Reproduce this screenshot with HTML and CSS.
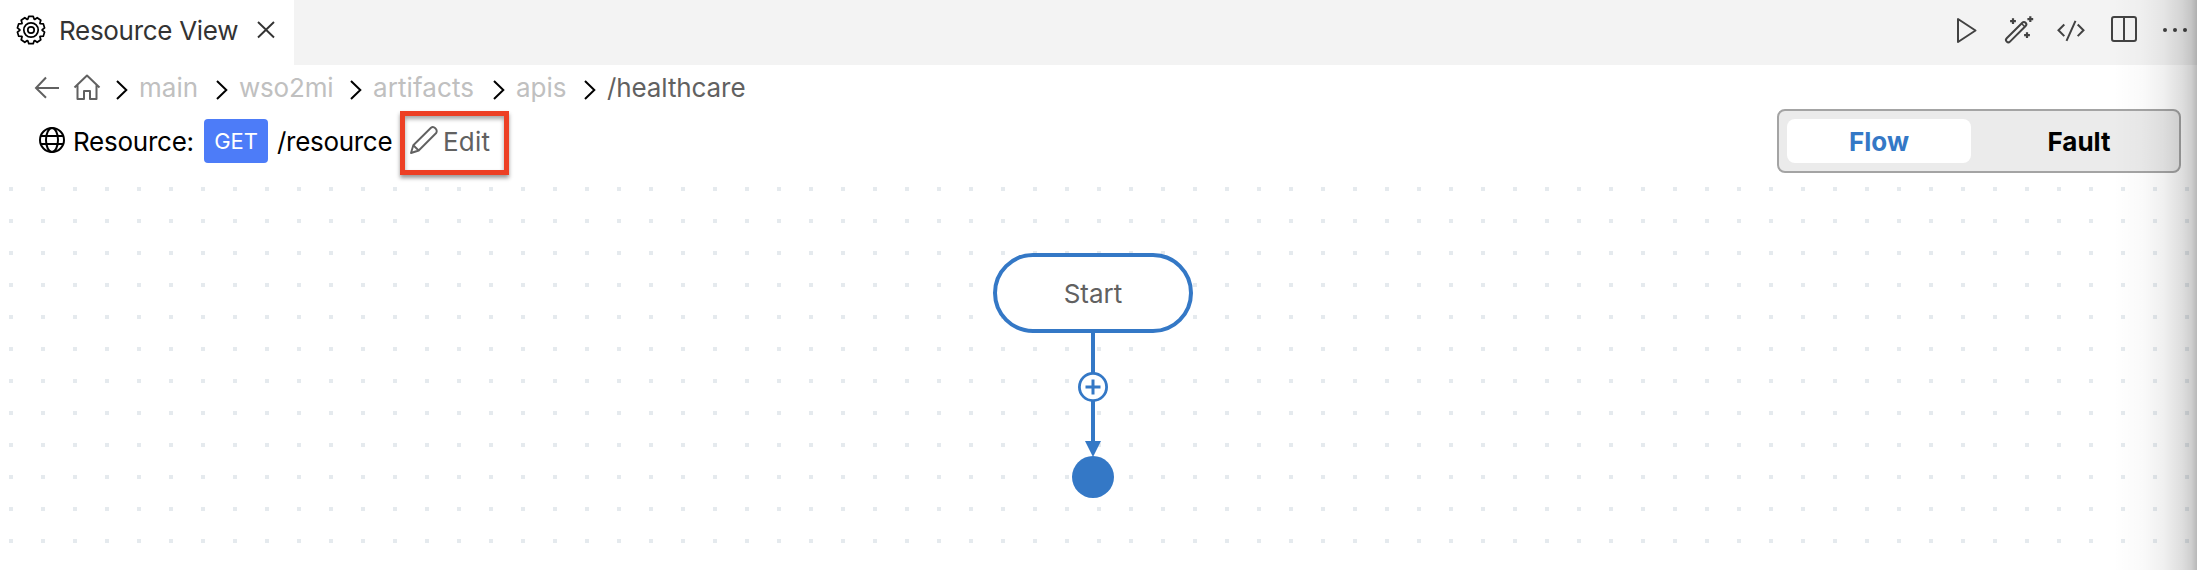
FILE: index.html
```html
<!DOCTYPE html>
<html lang="en">
<head>
<meta charset="utf-8">
<title>Resource View</title>
<link rel="stylesheet" href="styles.css">
</head>
<body>
<div class="window">
  <header class="tabbar">
    <div class="tab">
      <svg class="tab-gear" width="32" height="32" viewBox="-16 -16 32 32" fill="none" stroke="#000" stroke-width="1.7" stroke-linejoin="round">
        <path d="M-3.2-10.7 L-2.2-13.6 L2.2-13.6 L3.2-10.7 L3.7-10.5 L6.2-12.3 L9.8-9.7 L8.9-6.7 L9.2-6.3 L12.3-6.2 L13.6-2.1 L11.2-.3 L11.2.3 L13.6 2.1 L12.3 6.2 L9.2 6.3 L8.9 6.7 L9.8 9.7 L6.2 12.3 L3.7 10.5 L3.2 10.7 L2.2 13.6 L-2.2 13.6 L-3.2 10.7 L-3.7 10.5 L-6.2 12.3 L-9.8 9.7 L-8.9 6.7 L-9.2 6.3 L-12.3 6.2 L-13.6 2.1 L-11.2.3 L-11.2-.3 L-13.6-2.1 L-12.3-6.2 L-9.2-6.3 L-8.9-6.7 L-9.8-9.7 L-6.2-12.3 L-3.7-10.5 Z"/>
        <circle r="7.2"/><circle r="3.2"/>
      </svg>
      <span class="tab-title">Resource View</span>
      <svg class="tab-close" width="18" height="18" viewBox="0 0 18 18" fill="none" stroke="#333" stroke-width="1.9"><path d="M1 1 17 16.500M17 1 1 16.500"/></svg>
    </div>
    <div class="actions">
      <svg width="28" height="32" viewBox="0 0 28 32" fill="none" stroke="#424242" stroke-width="2" stroke-linejoin="round"><path d="M5 5V28L22.500 16.500Z"/></svg>
      <svg class="wand" width="32" height="32" viewBox="0 0 32 32" fill="none" stroke="#424242" stroke-width="2"><path d="M3.700 24.300 19.300 8.700a2.300 2.300 0 0 1 3.300 3.300L7 27.600a2.300 2.300 0 0 1-3.300-3.300Z"/><path d="M18.500 9.500 21.800 12.800" stroke-width="1.500"/><path d="M10 4.200V10M7.100 7.100H12.900M27.300 2.200V8M24.400 5.100H30.200M24 18.200V24M21.100 21.100H26.900" stroke-width="2.200"/></svg>
      <svg class="code" width="30" height="32" viewBox="0 0 30 32" fill="none" stroke="#424242" stroke-width="2"><path d="M8.300 10.500 2.500 16.300 8.300 22.100M21.700 10.500 27.500 16.300 21.700 22.100M19.500 6.800 10.500 26.800"/></svg>
      <svg class="split" width="28" height="32" viewBox="0 0 28 32" fill="none" stroke="#424242" stroke-width="2"><rect x="2" y="3" width="24" height="24" rx="2"/><path d="M14 3V27"/></svg>
      <svg class="more" width="28" height="32" viewBox="0 0 28 32" fill="#424242"><circle cx="4" cy="16" r="2"/><circle cx="14" cy="16" r="2"/><circle cx="24" cy="16" r="2"/></svg>
    </div>
  </header>

  <nav class="crumbs">
    <svg class="back" width="26" height="24" viewBox="0 0 26 24" fill="none" stroke="#616161" stroke-width="2"><path d="M12 1.500 2 12 12 21.800M2 12H25"/></svg>
    <svg class="home" width="28" height="28" viewBox="0 0 28 28" fill="none" stroke="#616161" stroke-width="2" stroke-linejoin="round"><path d="M1.500 14.500 14 2.500 26.500 14.500M4.500 12V26H11V18H17V26H23.500V12"/></svg>
    <svg class="chev" width="12" height="20" viewBox="0 0 12 20"><path d="M1 1 10.300 10 1 19"/></svg>
    <span class="crumb main">main</span>
    <svg class="chev" width="12" height="20" viewBox="0 0 12 20"><path d="M1 1 10.300 10 1 19"/></svg>
    <span class="crumb project">wso2mi</span>
    <svg class="chev" width="12" height="20" viewBox="0 0 12 20"><path d="M1 1 10.300 10 1 19"/></svg>
    <span class="crumb artifacts">artifacts</span>
    <svg class="chev" width="12" height="20" viewBox="0 0 12 20"><path d="M1 1 10.300 10 1 19"/></svg>
    <span class="crumb apis">apis</span>
    <svg class="chev" width="12" height="20" viewBox="0 0 12 20"><path d="M1 1 10.300 10 1 19"/></svg>
    <span class="crumb current">/healthcare</span>
  </nav>

  <section class="resource">
    <svg class="globe" width="28" height="28" viewBox="0 0 28 28" fill="none" stroke="#000" stroke-width="2"><circle cx="14" cy="14" r="12"/><ellipse cx="14" cy="14" rx="6" ry="12"/><path d="M3 10H25M3 18H25"/></svg>
    <span class="label">Resource:</span>
    <span class="method">GET</span>
    <span class="path">/resource</span>
    <div class="edit">
      <svg width="30" height="30" viewBox="0 0 30 30" fill="none" stroke="#616161" stroke-width="1.900" stroke-linejoin="round"><path d="M2 28 4.300 20.300 22 2.800Q24 1 26.300 3.200T27.200 8L9.700 25.500ZM4.300 20.300 9.700 25.500"/></svg>
      <span class="edit-text">Edit</span>
    </div>
    <div class="toggle">
      <span class="option selected">Flow</span>
      <span class="option">Fault</span>
    </div>
  </section>

  <main class="canvas">
    <div class="start"><span>Start</span></div>
    <svg class="flow" width="42" height="165" viewBox="0 0 42 165">
      <path d="M21 0V112" stroke="#3478c6" stroke-width="4"/>
      <path d="M13 108H29L21 124Z" fill="#3478c6"/>
      <circle cx="21" cy="54" r="13.600" fill="#fff" stroke="#3478c6" stroke-width="2.800"/>
      <path d="M13.500 54H28.500M21 46.500V61.500" stroke="#3478c6" stroke-width="3"/>
      <circle cx="21" cy="144" r="21" fill="#3478c6"/>
    </svg>
  </main>
  <div class="edge-shadow"></div>
</div>
</body>
</html>
```
FILE: styles.css
```css
* { box-sizing: border-box; }
body { margin: 0; background: #fff; font-family: Inter, "Liberation Sans", sans-serif; font-size: 26px; }
svg { display: block; flex: none; }
span { white-space: nowrap; flex: none; }
.window { position: relative; width: 2197px; height: 570px; overflow: hidden; display: flex; flex-direction: column; }

.tabbar { height: 65px; flex: none; display: flex; justify-content: space-between; background: #f3f3f3; }
.tab { width: 294px; height: 65px; padding-left: 15px; display: flex; align-items: center; background: #fff; color: #333; }
.tab-gear { margin-top: -5px; }
.tab-title { width: 181px; margin-left: 12px; margin-top: -3px; line-height: 32px; letter-spacing: -.3px; }
.tab-close { margin-left: 17px; margin-top: -5px; }
.actions { display: flex; padding: 14px 8px 0 0; }
.wand { margin-left: 22px; }
.code { margin-left: 21px; }
.split { margin-left: 24px; }
.more { margin-left: 23px; }

.crumbs { height: 50px; flex: none; display: flex; padding: 9px 0 0 34px; align-items: flex-start; line-height: 28px; }
.back { margin-top: 2px; }
.home { margin-left: 13px; margin-right: 15px; margin-top: -1px; }
.chev { margin-top: 6px; fill: none; stroke: #000; stroke-width: 2; }
.crumb { margin-left: 11px; color: #c0c0c0; }
.main { width: 77px; }
.project { width: 111px; letter-spacing: -.2px; }
.artifacts { width: 120px; letter-spacing: .1px; }
.apis { width: 68px; }
.current { color: #616161; letter-spacing: -.1px; }

.resource { height: 63px; flex: none; display: flex; align-items: flex-start; padding: 0 16px 0 38px; line-height: 32px; }
.globe { margin-top: 11px; }
.label { width: 131px; margin: 11px 0 0 7px; letter-spacing: -.25px; }
.method { width: 64px; height: 44px; margin-top: 4px; border-radius: 4px; background: #4d7cf8; color: #fff; font-size: 22px; line-height: 44px; text-align: center; letter-spacing: -.1px; }
.path { width: 123px; margin: 11px 0 0 9px; letter-spacing: -.3px; }
.edit { width: 109px; height: 64px; margin-top: -4px; border: 5px solid #ed4025; display: flex; padding: 9px 0 0 4px; color: #616161; box-shadow: 0 3px 4px rgba(0, 0, 0, .4), inset 0 3px 4px rgba(0, 0, 0, .35); }
.edit-text { margin: 1px 0 0 4px; letter-spacing: .2px; }
.toggle { margin: -6px 0 0 auto; width: 404px; height: 64px; display: flex; gap: 16px; padding: 8px; border: 2px solid #a4a4a4; border-radius: 8px; background: #ebebeb; font-weight: 700; }
.option { width: 184px; height: 44px; line-height: 45px; text-align: center; border-radius: 8px; }
.selected { background: #fff; color: #3478c6; }

.canvas { flex: 1; display: flex; flex-direction: column; align-items: center; padding: 75px 11px 0 0; background: conic-gradient(from 270deg at 4px 4px, #e5eaee 90deg, transparent 0) 9px 9px / 32px 32px; }
.start { width: 200px; height: 80px; flex: none; border: 4px solid #3478c6; border-radius: 40px; background: #fff; color: #616161; text-align: center; line-height: 74px; }
.flow { height: 165px; }
.edge-shadow { position: absolute; top: 0; right: 0; width: 84px; height: 570px; pointer-events: none; background: linear-gradient(to right, transparent, rgba(0,0,0,.02) 35%, rgba(0,0,0,.06) 60%, rgba(0,0,0,.13) 82%, rgba(0,0,0,.19) 93%, rgba(0,0,0,.28)); }
```
